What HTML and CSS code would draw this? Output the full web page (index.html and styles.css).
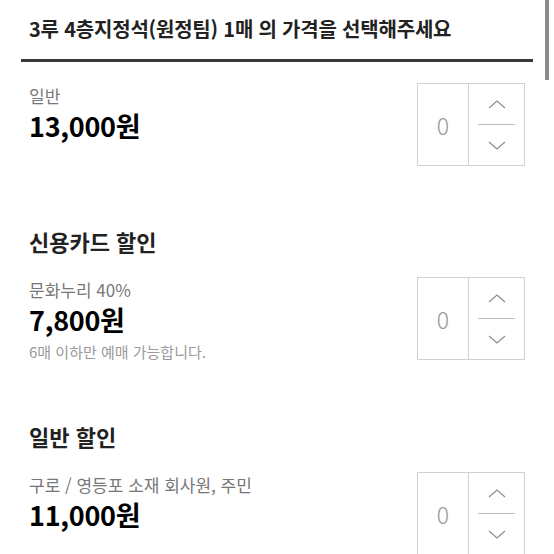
FILE: index.html
```html
<!DOCTYPE html>
<html lang="ko">
<head>
  <meta charset="UTF-8">
  <meta name="viewport" content="width=device-width, initial-scale=1.0">
  <title>가격 선택</title>
  <link rel="stylesheet" href="styles.css">
</head>
<body>
  <div class="scrollbar"></div>

  <h1 class="title">3루 4층지정석(원정팀) 1매 의 가격을 선택해주세요</h1>
  <div class="title-line"></div>

  <div class="price-list">
    <div class="price-item">
      <div class="price-info">
        <p class="price-label">일반</p>
        <p class="price-amount">13,000원</p>
      </div>
      <div class="stepper">
        <div class="stepper-count">0</div>
        <div class="stepper-buttons">
          <button class="stepper-btn">
            <svg width="18" height="9" viewBox="0 0 18 9"><polyline points="1,8 9,1 17,8" /></svg>
          </button>
          <div class="stepper-divider"></div>
          <button class="stepper-btn">
            <svg width="18" height="9" viewBox="0 0 18 9"><polyline points="1,1 9,8 17,1" /></svg>
          </button>
        </div>
      </div>
    </div>

    <h2 class="section-title">신용카드 할인</h2>
    <div class="price-item">
      <div class="price-info">
        <p class="price-label">문화누리 40%</p>
        <p class="price-amount">7,800원</p>
        <p class="price-note">6매 이하만 예매 가능합니다.</p>
      </div>
      <div class="stepper">
        <div class="stepper-count">0</div>
        <div class="stepper-buttons">
          <button class="stepper-btn">
            <svg width="18" height="9" viewBox="0 0 18 9"><polyline points="1,8 9,1 17,8" /></svg>
          </button>
          <div class="stepper-divider"></div>
          <button class="stepper-btn">
            <svg width="18" height="9" viewBox="0 0 18 9"><polyline points="1,1 9,8 17,1" /></svg>
          </button>
        </div>
      </div>
    </div>

    <h2 class="section-title">일반 할인</h2>
    <div class="price-item">
      <div class="price-info">
        <p class="price-label">구로 / 영등포 소재 회사원, 주민</p>
        <p class="price-amount">11,000원</p>
      </div>
      <div class="stepper">
        <div class="stepper-count">0</div>
        <div class="stepper-buttons">
          <button class="stepper-btn">
            <svg width="18" height="9" viewBox="0 0 18 9"><polyline points="1,8 9,1 17,8" /></svg>
          </button>
          <div class="stepper-divider"></div>
          <button class="stepper-btn">
            <svg width="18" height="9" viewBox="0 0 18 9"><polyline points="1,1 9,8 17,1" /></svg>
          </button>
        </div>
      </div>
    </div>
  </div>
</body>
</html>
```

FILE: styles.css
```css
  body {
    font-family: "Noto Sans CJK KR", "Noto Sans", sans-serif;
    margin: 0;
    background-color: #fff;
    color: #111;
    overflow: hidden;
  }

  .scrollbar {
    position: absolute;
    top: 0;
    right: 5px;
    width: 4px;
    height: 80px;
    background-color: #8a8a8a;
  }

  .title {
    margin: 0;
    padding: 17px 0 0 29px;
    font-size: 20px;
    line-height: 24px;
    font-weight: bold;
    color: #222;
    letter-spacing: -0.2px;
  }

  .title-line {
    margin: 18px 21px 0 21px;
    height: 3px;
    background-color: #383838;
  }

  .price-list {
    padding: 21px 29px 0 29px;
  }

  .price-item {
    display: flex;
    justify-content: space-between;
    align-items: flex-start;
  }

  .price-info {
    padding-top: 3px;
  }

  .price-label {
    margin: 0;
    font-size: 17px;
    line-height: 20px;
    color: #777;
  }

  .price-amount {
    margin: 5px 0 0 0;
    font-size: 27px;
    line-height: 30px;
    font-weight: bold;
    color: #000;
    letter-spacing: -0.3px;
  }

  .price-note {
    margin: 8px 0 0 0;
    font-size: 15px;
    line-height: 18px;
    color: #9a9a9a;
  }

  .section-title {
    margin: 62px 0 23px 0;
    font-size: 22px;
    line-height: 26px;
    font-weight: bold;
    color: #222;
  }

  .stepper {
    display: flex;
    width: 108px;
    height: 83px;
    box-sizing: border-box;
    border: 1px solid #d2d2d2;
  }

  .stepper-count {
    width: 50px;
    border-right: 1px solid #d2d2d2;
    display: flex;
    align-items: center;
    justify-content: center;
    font-size: 23px;
    font-weight: 300;
    color: #999;
  }

  .stepper-buttons {
    flex: 1;
    display: flex;
    flex-direction: column;
  }

  .stepper-btn {
    flex: 1;
    border: none;
    background: none;
    padding: 0;
    display: flex;
    align-items: center;
    justify-content: center;
  }

  .stepper-btn polyline {
    fill: none;
    stroke: #8c8c8c;
    stroke-width: 1.1;
  }

  .stepper-divider {
    margin: 0 9px;
    height: 1px;
    background-color: #bdbdbd;
  }
```
